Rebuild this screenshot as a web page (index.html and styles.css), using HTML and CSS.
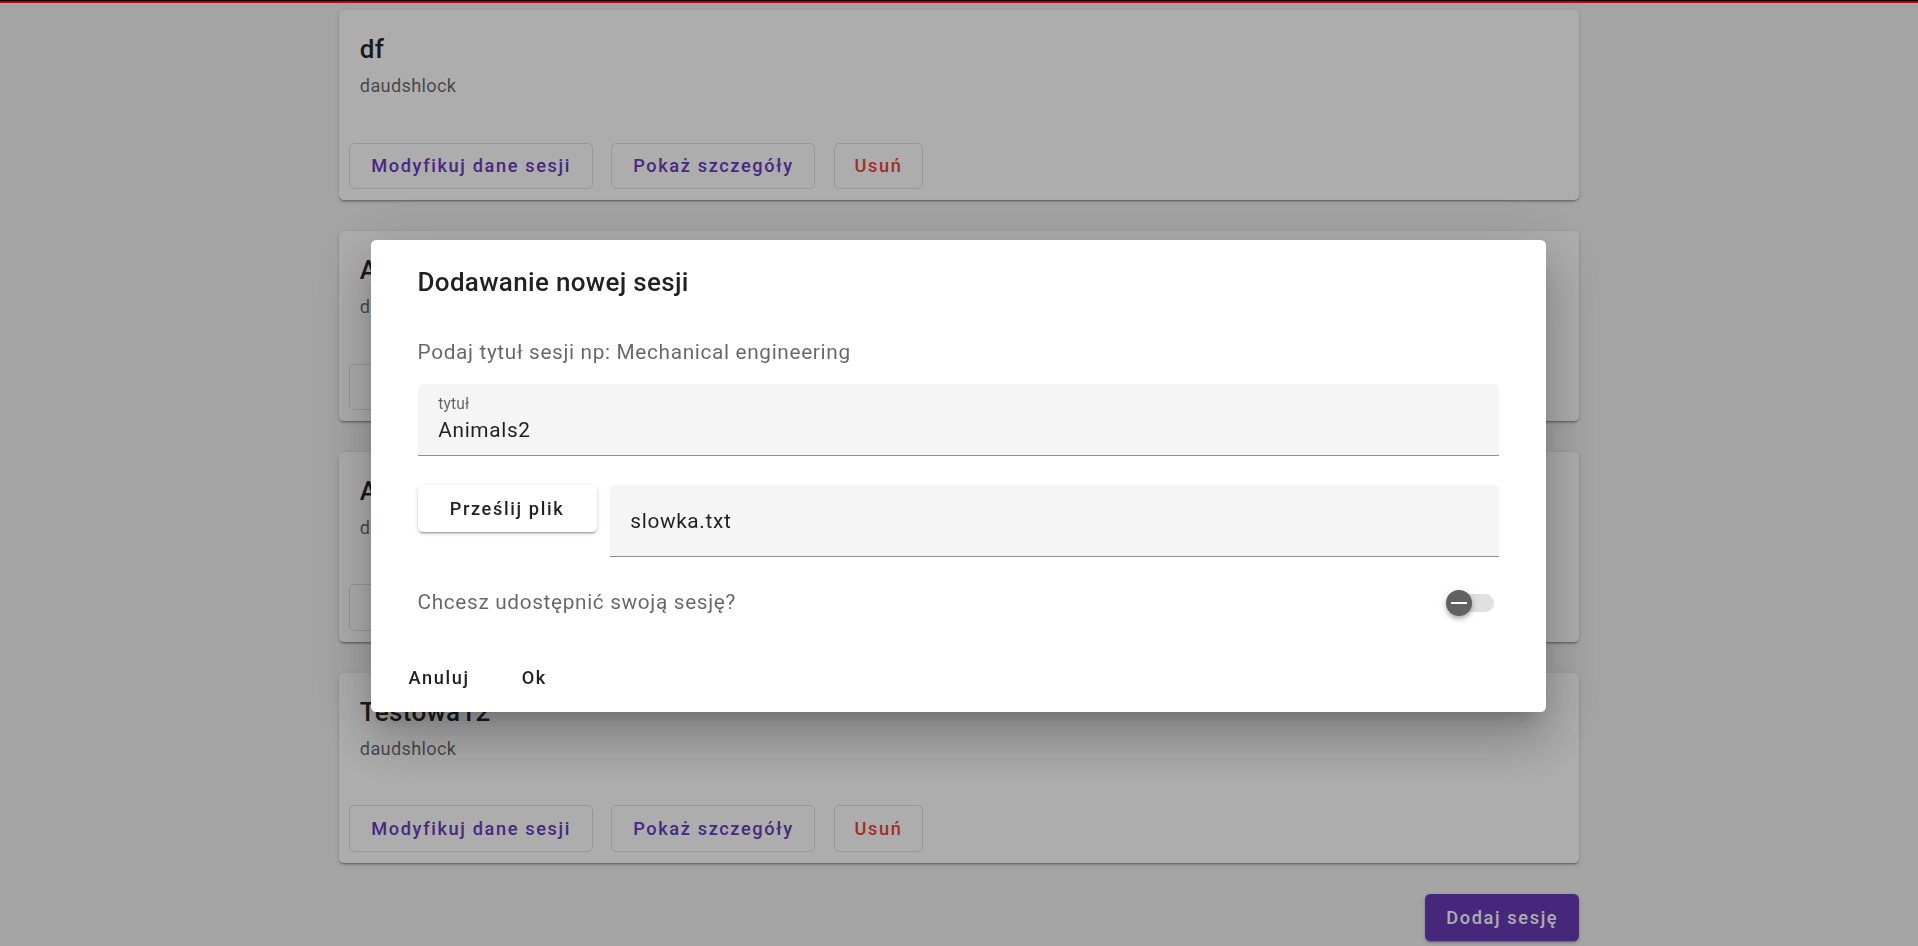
FILE: index.html
```html
<!DOCTYPE html>
<html lang="pl">
<head>
<meta charset="utf-8">
<title>Sesje</title>
<link rel="stylesheet" href="styles.css">
</head>
<body>
<div class="topbar"></div>
<main class="page">
  <section class="card">
    <div class="card-title">df</div>
    <div class="card-subtitle">daudshlock</div>
    <div class="card-actions">
      <button class="btn-outlined">Modyfikuj dane sesji</button>
      <button class="btn-outlined">Pokaż szczegóły</button>
      <button class="btn-outlined danger">Usuń</button>
    </div>
  </section>
  <section class="card">
    <div class="card-title">Animals</div>
    <div class="card-subtitle">daudshlock</div>
    <div class="card-actions">
      <button class="btn-outlined">Modyfikuj dane sesji</button>
      <button class="btn-outlined">Pokaż szczegóły</button>
      <button class="btn-outlined danger">Usuń</button>
    </div>
  </section>
  <section class="card">
    <div class="card-title">Animals1</div>
    <div class="card-subtitle">daudshlock</div>
    <div class="card-actions">
      <button class="btn-outlined">Modyfikuj dane sesji</button>
      <button class="btn-outlined">Pokaż szczegóły</button>
      <button class="btn-outlined danger">Usuń</button>
    </div>
  </section>
  <section class="card">
    <div class="card-title">Testowa12</div>
    <div class="card-subtitle">daudshlock</div>
    <div class="card-actions">
      <button class="btn-outlined">Modyfikuj dane sesji</button>
      <button class="btn-outlined">Pokaż szczegóły</button>
      <button class="btn-outlined danger">Usuń</button>
    </div>
  </section>
  <div class="page-actions">
    <button class="btn-primary">Dodaj sesję</button>
  </div>
</main>

<div class="scrim"></div>

<div class="dialog-layer">
  <div class="dialog">
    <div class="dialog-title">Dodawanie nowej sesji</div>
    <div class="dialog-body">
      <div class="hint">Podaj tytuł sesji np: Mechanical engineering</div>
      <div class="field">
        <div class="field-label">tytuł</div>
        <div class="field-value">Animals2</div>
      </div>
      <div class="upload-row">
        <button class="btn-upload">Prześlij plik</button>
        <div class="file-field">slowka.txt</div>
      </div>
      <div class="share-row">
        <span class="share-label">Chcesz udostępnić swoją sesję?</span>
        <div class="switch">
          <div class="switch-thumb"><span class="switch-minus"></span></div>
        </div>
      </div>
    </div>
    <div class="dialog-actions">
      <button class="btn-text">Anuluj</button>
      <button class="btn-text">Ok</button>
    </div>
  </div>
</div>
</body>
</html>
```
FILE: styles.css
```css
html, body {
  margin: 0;
  padding: 0;
  height: 100%;
  overflow: hidden;
}
body {
  background: #f2f2f2;
  font-family: Roboto, "Noto Sans", sans-serif;
  color: rgba(0, 0, 0, 0.87);
}
button {
  font-family: inherit;
  cursor: pointer;
}

.topbar {
  height: 1px;
  background: #1a0000;
  border-bottom: 2px solid #ff1010;
}

.page {
  width: 1240px;
  margin: 0 auto;
  padding-top: 7px;
}

.card {
  background: #fff;
  border-radius: 5.2px;
  margin-bottom: 31.2px;
  box-shadow: 0 3px 1px -2px rgba(0,0,0,.2), 0 2px 2px 0 rgba(0,0,0,.14), 0 1px 5px 0 rgba(0,0,0,.12);
}
.card-title {
  padding: 18.8px 20.8px 0;
  font-weight: 500;
  font-size: 26px;
  line-height: 41.6px;
  letter-spacing: .0125em;
  color: rgba(0,0,0,.87);
}
.card-subtitle {
  padding: 2px 20.8px 31.2px;
  font-size: 18.2px;
  line-height: 28.6px;
  letter-spacing: .0178571em;
  color: rgba(0,0,0,.6);
}
.card-actions {
  display: flex;
  gap: 18.5px;
  padding: 10.4px;
}
.btn-outlined {
  height: 46.8px;
  padding: 0 20.8px;
  min-width: 83px;
  background: transparent;
  border: 1px solid rgba(0,0,0,.12);
  border-radius: 5.2px;
  font-size: 18.2px;
  font-weight: 500;
  letter-spacing: .0892857em;
  color: #6a3bbf;
}
.btn-outlined.danger {
  color: #f44336;
  padding: 0 19.5px;
}

.page-actions {
  display: flex;
  justify-content: flex-end;
}
.btn-primary {
  height: 46.8px;
  padding: 0 20.8px;
  border: none;
  border-radius: 5.2px;
  background: #673ab7;
  color: #fff;
  font-size: 18.2px;
  font-weight: 500;
  letter-spacing: .0892857em;
  box-shadow: 0 3px 1px -2px rgba(0,0,0,.2), 0 2px 2px 0 rgba(0,0,0,.14), 0 1px 5px 0 rgba(0,0,0,.12);
}

.scrim {
  position: fixed;
  inset: 0;
  background: rgba(0,0,0,.32);
}

.dialog-layer {
  position: fixed;
  inset: 0;
  padding-top: 6px;
  padding-right: 2px;
  box-sizing: border-box;
  display: flex;
  align-items: center;
  justify-content: center;
}
.dialog {
  width: 1175px;
  background: #fff;
  border-radius: 5.2px;
  box-shadow: 0 14px 20px -9px rgba(0,0,0,.2), 0 31px 49px 4px rgba(0,0,0,.14), 0 12px 60px 10px rgba(0,0,0,.12);
}
.dialog-title {
  padding: 22.3px 47px 0;
  font-size: 26px;
  font-weight: 500;
  line-height: 41.6px;
  letter-spacing: .0125em;
  color: rgba(0,0,0,.87);
}
.dialog-body {
  padding: 33.4px 46.5px 0 47px;
}
.hint {
  font-size: 20.8px;
  line-height: 31.2px;
  letter-spacing: .03125em;
  color: rgba(0,0,0,.6);
}
.field {
  margin-top: 15.5px;
  height: 72px;
  box-sizing: border-box;
  padding: 11.5px 20.8px 0;
  background: #f5f5f5;
  border-bottom: 1px solid #8f8f8f;
  border-radius: 5.2px 5.2px 0 0;
}
.field-label {
  font-size: 15.6px;
  line-height: 16px;
  letter-spacing: .01em;
  color: rgba(0,0,0,.6);
}
.field-value {
  margin-top: 6px;
  font-size: 20.8px;
  line-height: 24px;
  letter-spacing: .03125em;
  color: rgba(0,0,0,.87);
}
.upload-row {
  margin-top: 29px;
  display: flex;
  align-items: flex-start;
  gap: 13px;
}
.btn-upload {
  width: 179px;
  height: 46.8px;
  border: none;
  border-radius: 5.2px;
  background: #fff;
  color: rgba(0,0,0,.87);
  font-size: 18.2px;
  font-weight: 500;
  letter-spacing: .0892857em;
  box-shadow: 0 3px 1px -2px rgba(0,0,0,.2), 0 2px 2px 0 rgba(0,0,0,.14), 0 1px 5px 0 rgba(0,0,0,.12);
}
.file-field {
  flex: 1;
  height: 72px;
  box-sizing: border-box;
  display: flex;
  align-items: center;
  padding: 0 20.8px;
  background: #f5f5f5;
  border-bottom: 1px solid #8f8f8f;
  border-radius: 5.2px 5.2px 0 0;
  font-size: 20.8px;
  letter-spacing: .03125em;
  color: rgba(0,0,0,.87);
}
.share-row {
  margin-top: 22px;
  height: 46.8px;
  display: flex;
  align-items: center;
  justify-content: space-between;
}
.share-label {
  font-size: 20.8px;
  letter-spacing: .03125em;
  color: rgba(0,0,0,.6);
}
.switch {
  position: relative;
  width: 47px;
  height: 18px;
  margin-right: 5.5px;
  margin-top: 2px;
  border-radius: 9px;
  background: #e0e0e0;
}
.switch-thumb {
  position: absolute;
  left: -1px;
  top: -4px;
  width: 26px;
  height: 26px;
  border-radius: 50%;
  background: #616161;
  display: flex;
  align-items: center;
  justify-content: center;
  box-shadow: 0 2px 4px -1px rgba(0,0,0,.2), 0 4px 5px 0 rgba(0,0,0,.14), 0 1px 10px 0 rgba(0,0,0,.12);
}
.switch-minus {
  width: 16px;
  height: 2px;
  background: #fff;
}
.dialog-actions {
  margin-top: 28.6px;
  display: flex;
  gap: 10.4px;
  padding: 0 10.4px 10.6px 17.2px;
}
.btn-text {
  height: 46.8px;
  padding: 0 20.8px;
  background: transparent;
  border: none;
  border-radius: 5.2px;
  color: rgba(0,0,0,.87);
  font-size: 18.2px;
  font-weight: 500;
  letter-spacing: .0892857em;
}
```
